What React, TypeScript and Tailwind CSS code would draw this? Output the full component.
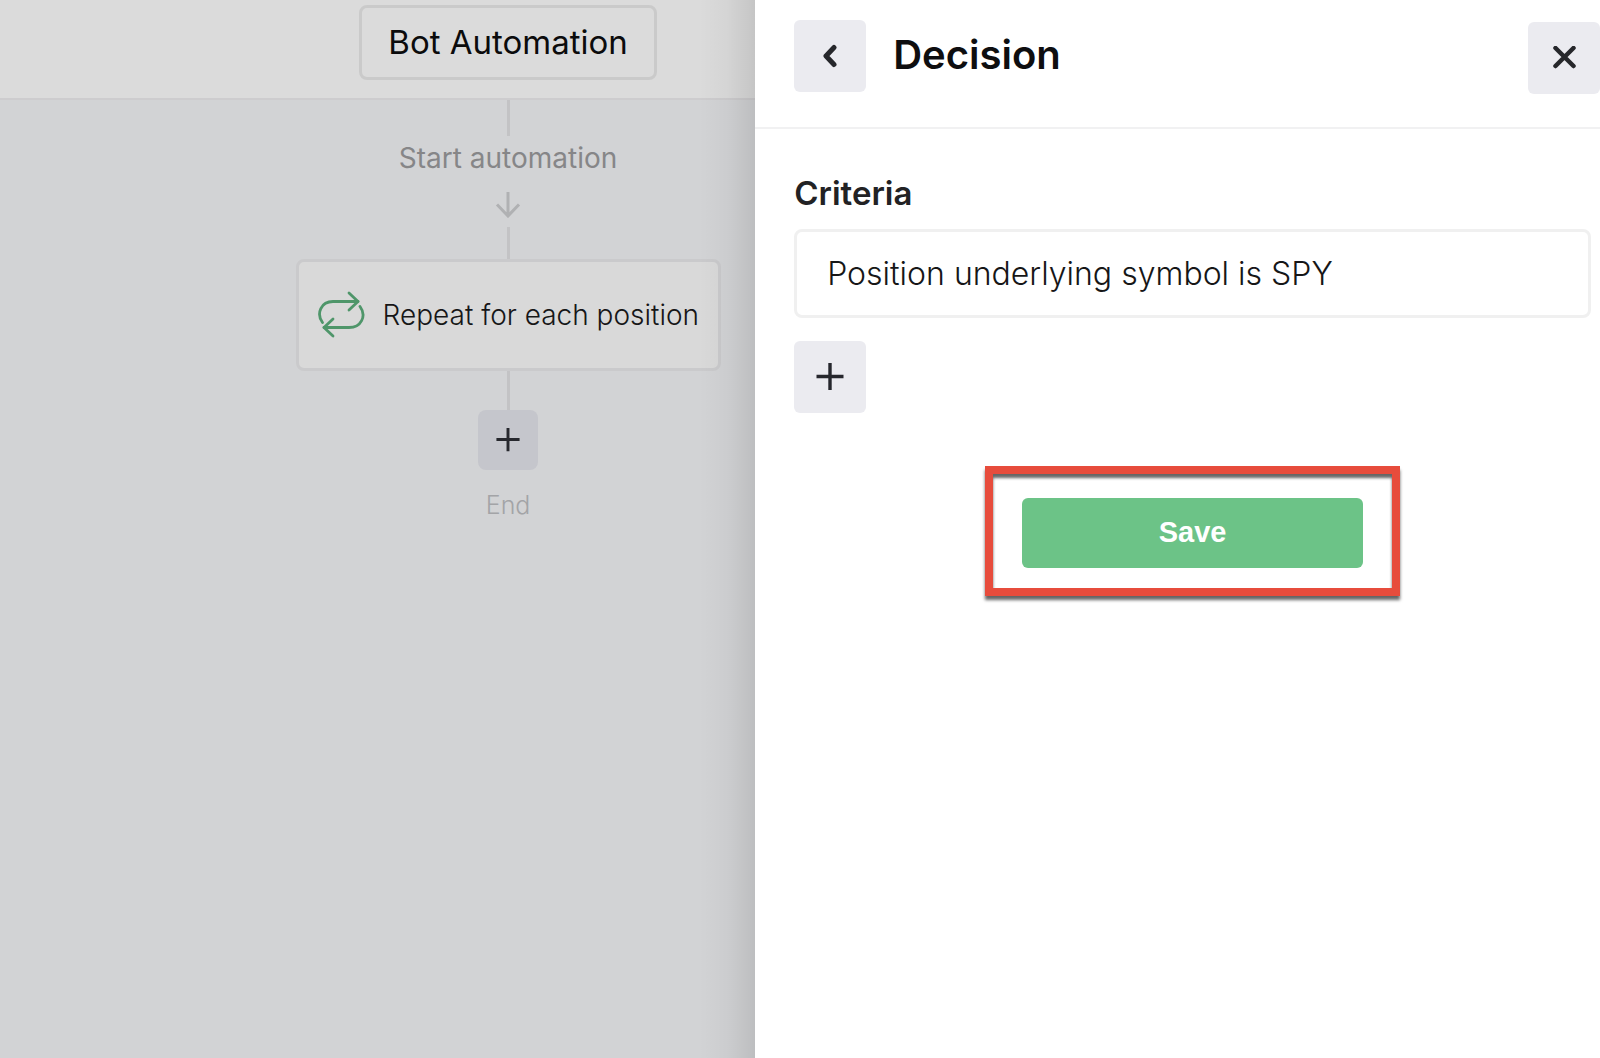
import type { ReactNode } from "react";

function Connector({ className }: { className: string }) {
  return <div className={`w-[3px] bg-[#c3c3c5] ${className}`} />;
}

function PlusIcon({ className }: { className: string }) {
  return (
    <svg className={className} viewBox="0 0 28 28" fill="none" stroke="#26272d" strokeWidth="3.4" aria-hidden="true">
      <path d="M14 0V27M0.5 13.5H27.5" />
    </svg>
  );
}

function ArrowDown() {
  return (
    <svg className="h-[26px] w-[26px]" viewBox="0 0 26 26" fill="none" stroke="#b0b1b3" strokeWidth="3" aria-hidden="true">
      <path d="M13 0V24M2 12.5L13 24L24 12.5" />
    </svg>
  );
}

function RepeatIcon() {
  return (
    <svg
      className="h-12 w-12 shrink-0"
      viewBox="0 0 48 48"
      fill="none"
      stroke="#4f966a"
      strokeWidth="2.8"
      strokeLinecap="round"
      strokeLinejoin="round"
      aria-hidden="true"
    >
      <path d="M5.500 31.500C-1 22.500 4 10.500 16 10.500H41" />
      <path d="M32 2L41 10.500L32 19" />
      <path d="M43 15.500C50 25 44 36.500 32 36.500H7" />
      <path d="M16 28L7 36.500L16 45" />
    </svg>
  );
}

function SquareButton({ label, children }: { label: string; children: ReactNode }) {
  return (
    <button
      type="button"
      aria-label={label}
      className="flex size-[72px] shrink-0 items-center justify-center rounded-md bg-[#ebebf0]"
    >
      {children}
    </button>
  );
}

function Flow() {
  return (
    <main className="flex w-[47.2%] shrink-0 flex-col bg-[#d2d3d5]">
      <header className="flex justify-center border-b-2 border-[#cdccce] bg-[#dbdbdb] pt-[5px] pb-[18px] pl-[261px]">
        <button
          type="button"
          className="h-[75px] w-[298px] rounded-lg border-3 border-[#cacaca] text-[33px] whitespace-nowrap text-[#0b0b0c]"
        >
          Bot Automation
        </button>
      </header>
      <div className="flex flex-col items-center pl-[261px]">
        <Connector className="h-9" />
        <p className="mt-0.5 text-[28px] leading-10 text-[#868688]">Start automation</p>
        <div className="mt-[14px]">
          <ArrowDown />
        </div>
        <Connector className="mt-[9px] h-8" />
        <button
          type="button"
          className="flex h-[112px] w-[425px] items-center gap-[18px] rounded-lg border-3 border-[#cacacc] bg-[#d9d9d9] pl-[18px] text-[28px] font-light whitespace-nowrap text-[#161617]"
        >
          <RepeatIcon />
          Repeat for each position
        </button>
        <Connector className="h-[39px]" />
        <button
          type="button"
          aria-label="Add step"
          className="flex size-[60px] items-center justify-center rounded-lg bg-[#c5c6cc]"
        >
          <PlusIcon className="size-6" />
        </button>
        <p className="mt-[19px] text-[25px] leading-8 font-light text-[#a3a4a7]">End</p>
      </div>
    </main>
  );
}

function DecisionPanel() {
  return (
    <aside className="relative flex-1 bg-white">
      <div className="pointer-events-none absolute inset-y-0 right-full w-14 bg-linear-to-l from-black/10 via-black/3 to-transparent" />
      <header className="flex items-start border-b-2 border-[#f1f1f2] pt-5 pb-[33px] pl-[39px]">
        <SquareButton label="Back">
          <svg className="h-6 w-4" viewBox="0 0 16 24" fill="none" stroke="#26272b" strokeWidth="5" aria-hidden="true">
            <path d="M12 3.500L4 12L12 20.500" strokeLinecap="round" strokeLinejoin="round" />
          </svg>
        </SquareButton>
        <h1 className="ml-[27px] flex-1 text-[40px] leading-[70px] font-semibold text-[#0e0e10]">Decision</h1>
        <div className="pt-0.5">
          <SquareButton label="Close">
            <svg className="size-6" viewBox="0 0 24 24" fill="none" stroke="#26272b" strokeWidth="4.500" aria-hidden="true">
              <path d="M3.500 2L21.500 20M21.500 2L3.500 20" strokeLinecap="round" />
            </svg>
          </SquareButton>
        </div>
      </header>
      <form className="flex flex-col pt-11 pr-[9px] pl-[39px]" onSubmit={(e) => e.preventDefault()}>
        <label htmlFor="criteria" className="text-[33px] leading-10 font-semibold text-[#222224]">
          Criteria
        </label>
        <input
          id="criteria"
          type="text"
          defaultValue="Position underlying symbol is SPY"
          className="mt-4 h-[89px] w-full rounded-lg border-3 border-[#f0f0f0] bg-white px-[30px] text-[32px] font-light text-[#161617] outline-none"
        />
        <div className="mt-[23px]">
          <SquareButton label="Add criteria">
            <PlusIcon className="size-7" />
          </SquareButton>
        </div>
        <div className="mt-[53px] self-center border-8 border-[#e74c3c] px-[29px] pt-6 pb-5 shadow-[0_4px_3px_rgba(0,0,0,0.6),inset_0_4px_3px_rgba(0,0,0,0.6)]">
          <button
            type="submit"
            className="block h-[70px] w-[341px] rounded-md bg-[#6cc387] font-['Liberation_Sans',Arial,sans-serif] text-[29px] font-bold text-white"
          >
            Save
          </button>
        </div>
      </form>
    </aside>
  );
}

export default function App() {
  return (
    <div className="flex min-h-screen overflow-hidden bg-white font-[Inter,sans-serif]">
      <Flow />
      <DecisionPanel />
    </div>
  );
}
